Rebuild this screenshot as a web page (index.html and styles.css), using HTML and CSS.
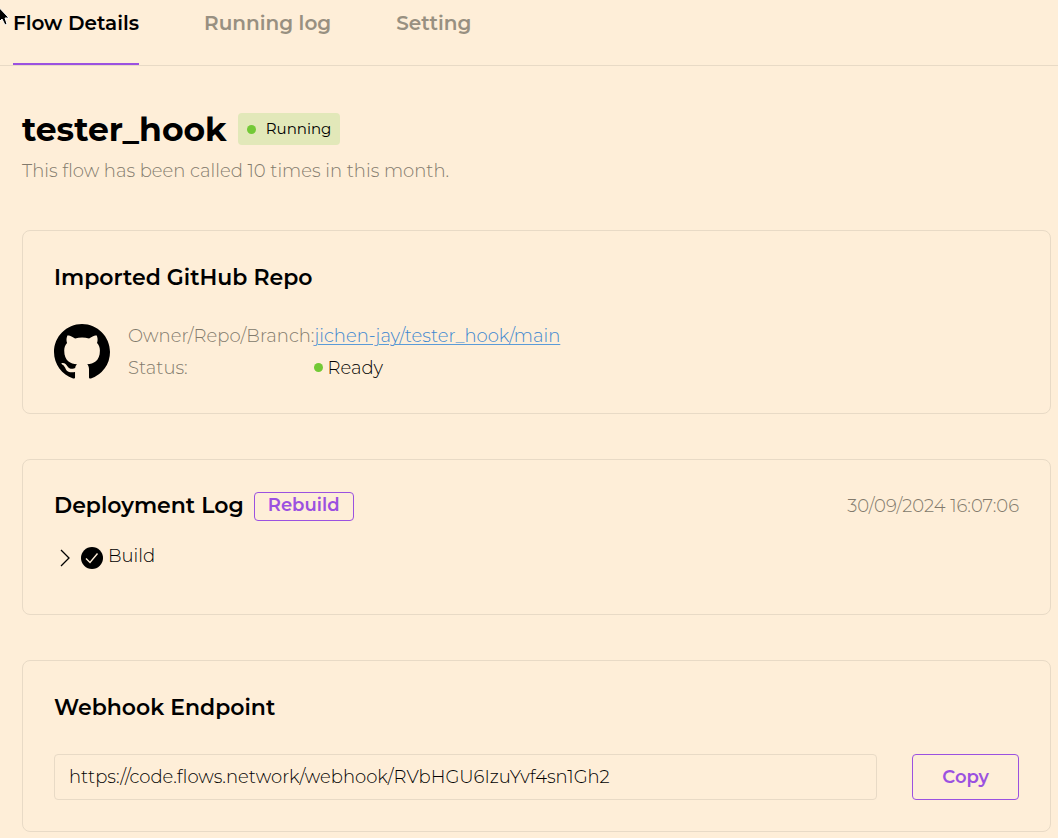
FILE: index.html
```html
<!DOCTYPE html>
<html lang="en">
<head>
<meta charset="utf-8">
<title>tester_hook - Flow Details</title>
<meta name="viewport" content="width=device-width, initial-scale=1">
<link rel="stylesheet" href="styles.css">
</head>
<body>
<nav class="tabs">
  <a class="tab tab-active" href="#details" aria-current="page">Flow Details</a>
  <a class="tab" href="#log">Running log</a>
  <a class="tab" href="#setting">Setting</a>
</nav>
<main class="page">
  <header class="intro">
    <div class="title-row">
      <h1 class="title">tester_hook</h1>
      <span class="badge"><span class="dot"></span>Running</span>
    </div>
    <p class="summary">This flow has been called 10 times in this month.</p>
  </header>

  <section class="card">
    <h2 class="card-title">Imported GitHub Repo</h2>
    <div class="repo">
      <svg class="github" viewBox="0 0 16 16" aria-hidden="true"><path fill-rule="evenodd" d="M8 0C3.58 0 0 3.58 0 8c0 3.54 2.29 6.53 5.47 7.59.4.07.55-.17.55-.38 0-.19-.01-.82-.01-1.49-2.01.37-2.53-.49-2.69-.94-.09-.23-.48-.94-.82-1.13-.28-.15-.68-.52-.01-.53.63-.01 1.08.58 1.23.82.72 1.21 1.87.87 2.33.66.07-.52.28-.87.51-1.07-1.78-.2-3.64-.89-3.64-3.95 0-.87.31-1.59.82-2.15-.08-.2-.36-1.02.08-2.12 0 0 .67-.21 2.2.82.64-.18 1.32-.27 2-.27s1.36.09 2 .27c1.53-1.04 2.2-.82 2.2-.82.44 1.1.16 1.92.08 2.12.51.56.82 1.27.82 2.15 0 3.07-1.87 3.75-3.65 3.95.29.25.54.73.54 1.48 0 1.07-.01 1.93-.01 2.2 0 .21.15.46.55.38A8.01 8.01 0 0 0 16 8c0-4.42-3.58-8-8-8z"/></svg>
      <dl class="facts">
        <dt class="fact-name">Owner/Repo/Branch:</dt>
        <dd class="fact-value"><a class="repo-link" href="#repo">jichen-jay/tester_hook/main</a></dd>
        <dt class="fact-name">Status:</dt>
        <dd class="fact-value ready"><span class="dot"></span>Ready</dd>
      </dl>
    </div>
  </section>

  <section class="card card-log">
    <div class="log-head">
      <h2 class="card-title">Deployment Log</h2>
      <button class="button button-small" type="button">Rebuild</button>
      <time class="time" datetime="2024-09-30T16:07:06">30/09/2024 16:07:06</time>
    </div>
    <button class="step" type="button" aria-expanded="false">
      <svg class="chevron" viewBox="0 0 10 18" aria-hidden="true"><path d="M1 1l8 8-8 8"/></svg>
      <svg class="check" viewBox="0 0 22 22" aria-hidden="true"><circle cx="11" cy="11" r="11"/><path d="M5 11.500l4 4L16.500 6.500"/></svg>
      <span class="step-name">Build</span>
    </button>
  </section>

  <section class="card">
    <h2 class="card-title" id="endpoint-title">Webhook Endpoint</h2>
    <div class="endpoint">
      <input class="endpoint-url" type="text" readonly aria-labelledby="endpoint-title" value="https://code.flows.network/webhook/RVbHGU6IzuYvf4sn1Gh2">
      <button class="button button-copy" type="button">Copy</button>
    </div>
  </section>
</main>
<svg class="pointer" viewBox="0 0 10 27" aria-hidden="true"><path d="M-8 0L9 18H5l2 6-2 1-3-6-4 4z"/></svg>
</body>
</html>
```
FILE: styles.css
```css
* {
  box-sizing: border-box;
}

body {
  margin: 0;
  background: #feeed8;
  color: #000;
  font-family: Montserrat, Inter, sans-serif;
  font-size: 18px;
  font-weight: 300;
  line-height: 24px;
}

h1, h2, p, dl, dd {
  margin: 0;
}

button, input {
  font: inherit;
  color: inherit;
  background: none;
}

.tabs {
  display: flex;
  gap: 65px;
  padding-left: 13px;
  border-bottom: 1px solid #e8dac6;
}

.tab {
  padding: 11px 0 28px;
  border-bottom: 2px solid transparent;
  color: #989081;
  font-size: 20px;
  font-weight: 600;
  text-decoration: none;
  white-space: nowrap;
}

.tab-active {
  border-color: #9b51e0;
  color: #000;
}

.page {
  display: flex;
  flex-direction: column;
  gap: 45px;
  padding: 41px 7px 6px 22px;
}

.title-row {
  display: flex;
  align-items: center;
  gap: 11px;
}

.title {
  font-size: 33px;
  line-height: 44px;
  font-weight: 700;
}

.badge {
  display: flex;
  align-items: center;
  gap: 10px;
  padding: 4px 9px;
  border-radius: 4px;
  background: #e2e8b9;
  font-size: 15px;
  font-weight: 400;
}

.dot {
  flex: none;
  width: 9px;
  height: 9px;
  border-radius: 50%;
  background: #73c936;
}

.summary {
  margin: 8px 0 2px;
  color: #827a6c;
}

.card {
  padding: 32px 31px 31px;
  border: 1px solid #e8dac6;
  border-radius: 8px;
}

.card-title {
  font-size: 22px;
  line-height: 30px;
  font-weight: 600;
}

.repo {
  display: flex;
  gap: 18px;
  margin-top: 31px;
  padding-bottom: 2px;
}

.github {
  flex: none;
  width: 56px;
  height: 56px;
}

.facts {
  display: grid;
  grid-template-columns: auto auto;
  row-gap: 7px;
}

.fact-name {
  color: #827a6c;
}

.repo-link {
  color: #3d87d0;
  text-decoration-thickness: 1px;
  text-decoration-color: #5b9bd8;
  text-underline-offset: 2px;
}

.ready {
  display: flex;
  align-items: center;
  gap: 4px;
}

.card-log {
  padding-top: 31px;
  padding-bottom: 45px;
}

.log-head {
  display: flex;
  align-items: center;
  gap: 10px;
}

.time {
  margin-left: auto;
  color: #827a6c;
}

.button {
  border: 1px solid #9b51e0;
  border-radius: 4px;
  color: #9b51e0;
  font-weight: 600;
}

.button-small {
  padding: 0 13px 3px;
}

.step {
  display: flex;
  align-items: center;
  margin-top: 22px;
  padding: 0 6px;
  border: 0;
}

.chevron {
  width: 10px;
  height: 18px;
  margin: 4px 11px 0 0;
  fill: none;
  stroke: #000;
  stroke-width: 1.3;
}

.check {
  width: 22px;
  height: 22px;
  margin: 4px 5px 0 0;
}

.check path {
  fill: none;
  stroke: #feeed8;
  stroke-width: 1.4;
}

.endpoint {
  display: flex;
  gap: 35px;
  margin-top: 31px;
}

.endpoint-url {
  flex: 1;
  min-width: 0;
  padding: 10px 14px;
  border: 1px solid #e8dac6;
  border-radius: 4px;
}

.button-copy {
  padding: 10px 29px;
}

.pointer {
  position: absolute;
  top: 0;
  left: 0;
  width: 10px;
  height: 27px;
  stroke: #fff;
}
```
